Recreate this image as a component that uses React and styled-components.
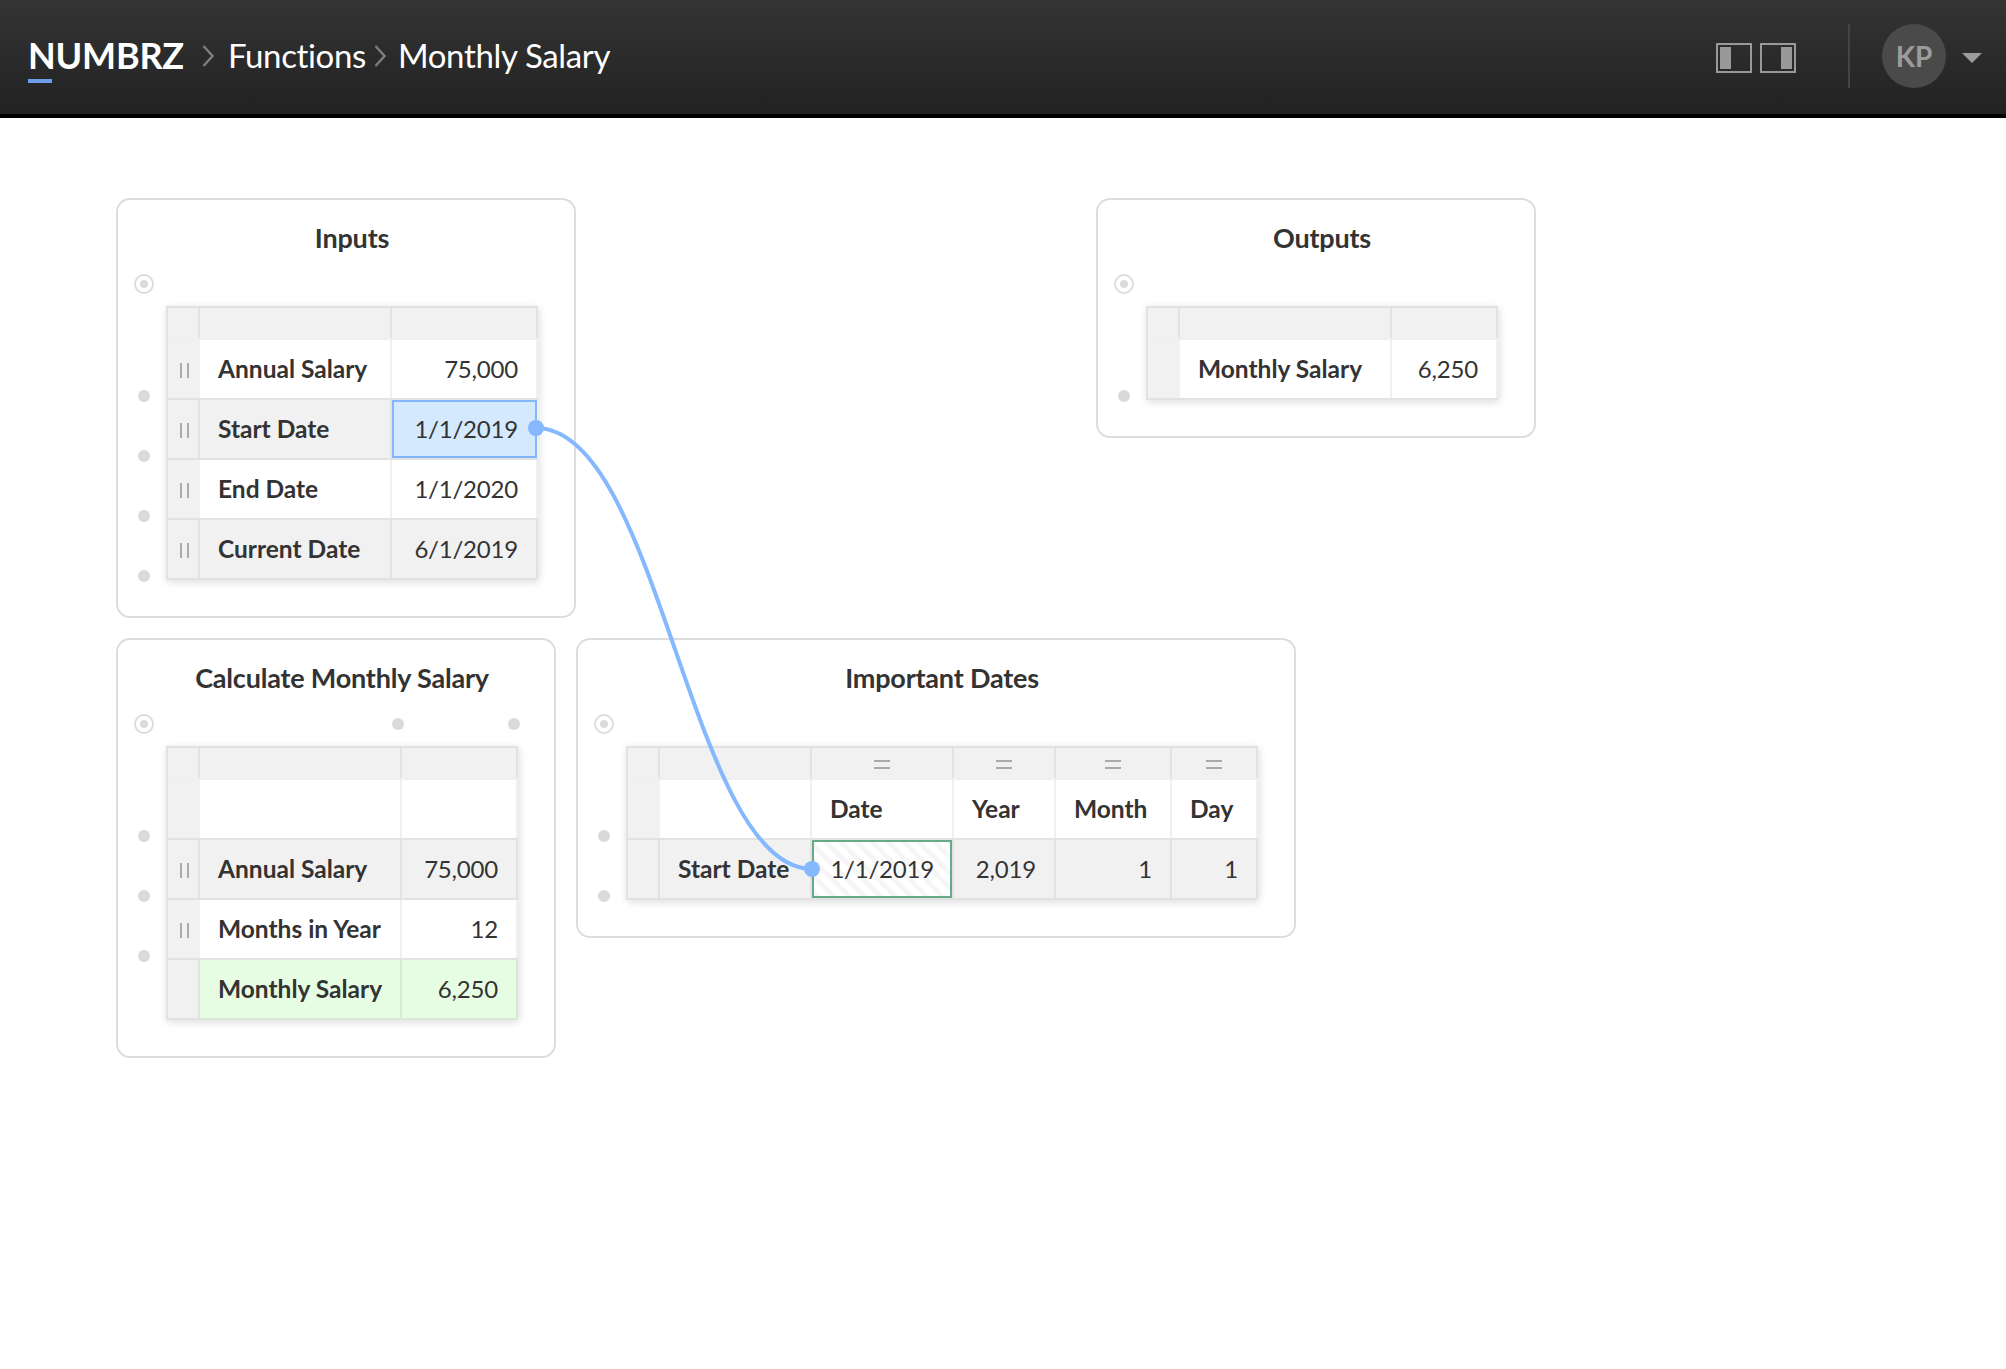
import React from "react";
import styled, { createGlobalStyle } from "styled-components";

const Global = createGlobalStyle`
  html, body { margin: 0; padding: 0; background: #fff; }
  body { font-family: Lato, "Open Sans", "Liberation Sans", sans-serif; color: #333; }
  * { box-sizing: border-box; }
`;

const Page = styled.div`
  width: 2006px;
  height: 1369px;
  overflow: hidden;
  background: #fff;
`;

const TopBar = styled.header`
  height: 118px;
  border-bottom: 4px solid #000;
  background: linear-gradient(#343434, #222222);
  display: flex;
  align-items: center;
  padding: 0 24px 2px 28px;
`;

const Crumbs = styled.nav`
  display: flex;
  align-items: center;
  flex: 1;
  margin-top: -2px;
  color: #fff;
`;

const Logo = styled.span`
  position: relative;
  font-size: 36px;
  font-weight: 700;
  line-height: 56px;
  letter-spacing: -0.2px;
  &::after {
    content: "";
    position: absolute;
    left: 0;
    top: 52px;
    width: 24px;
    height: 4px;
    background: #6f9fec;
  }
`;

const Crumb = styled.span`
  font-size: 33px;
  line-height: 56px;
  letter-spacing: -0.35px;
`;

const Chevron = styled.svg`
  width: 12px;
  height: 22px;
  margin: 2px ${(p) => p.$right}px 0 ${(p) => p.$left}px;
  fill: none;
  stroke: #7d7d7d;
  stroke-width: 2.4;
`;

const LayoutIcon = styled.svg`
  width: 36px;
  height: 30px;
  margin: 4px 0 0 8px;
  display: block;
`;

const Divider = styled.div`
  width: 2px;
  height: 64px;
  background: #444;
  margin: 0 32px 0 52px;
`;

const Avatar = styled.div`
  width: 64px;
  height: 64px;
  border-radius: 50%;
  background: #4a4a4a;
  color: #9c9c9c;
  font-size: 28px;
  font-weight: 700;
  display: flex;
  align-items: center;
  justify-content: center;
`;

const Caret = styled.div`
  width: 0;
  height: 0;
  margin: 4px 0 0 16px;
  border-left: 10px solid transparent;
  border-right: 10px solid transparent;
  border-top: 10px solid #9c9c9c;
`;

const Canvas = styled.main`
  position: relative;
  height: 1251px;
  padding: 80px 0 0 116px;
  display: flex;
  flex-direction: column;
  gap: 20px;
`;

const PanelRow = styled.div`
  display: flex;
  align-items: flex-start;
  gap: ${(p) => p.$gap}px;
`;

const Panel = styled.section`
  border: 2px solid #ddd;
  border-radius: 14px;
  padding: 0 36px 36px 48px;
  background: #fff;
`;

const Title = styled.h2`
  margin: 0;
  height: 106px;
  padding-top: 19px;
  font-size: 27px;
  line-height: 38px;
  font-weight: 700;
  letter-spacing: -0.2px;
  text-align: center;
  color: #333;
`;

const Table = styled.div`
  position: relative;
  border-top: 2px solid #e2e2e2;
  box-shadow: 1px 2px 8px rgba(0, 0, 0, 0.14);
`;

const Radio = styled.span`
  position: absolute;
  left: -32px;
  top: -34px;
  width: 20px;
  height: 20px;
  border: 2px solid #ddd;
  border-radius: 50%;
  &::after {
    content: "";
    position: absolute;
    left: 4px;
    top: 4px;
    width: 8px;
    height: 8px;
    border-radius: 50%;
    background: #dadada;
  }
`;

const Row = styled.div`
  position: relative;
  display: grid;
  grid-template-columns: ${(p) => p.$cols};
  height: ${(p) => (p.$header ? 32 : 60)}px;
  border-left: 2px solid #e2e2e2;
  border-bottom: 2px solid ${(p) => (p.$header ? "#f0f0f0" : "#e2e2e2")};
  background: ${(p) => (p.$grey ? "#f1f1f1" : "#fff")};
`;

const RowPort = styled.span`
  position: absolute;
  left: -30px;
  bottom: -4px;
  width: 12px;
  height: 12px;
  border-radius: 50%;
  background: #dadada;
`;

const HandleCell = styled.div`
  position: relative;
  background: #f1f1f1;
  border-right: 2px solid ${(p) => (p.$line ? "#e2e2e2" : "#f1f1f1")};
  display: flex;
  align-items: center;
  justify-content: center;
  padding-left: 2px;
`;

const RowHandle = styled.span`
  width: 9px;
  height: 15px;
  margin-top: 2px;
  border-left: 2px solid #aaa;
  border-right: 2px solid #aaa;
`;

const ColHandle = styled.span`
  width: 16px;
  height: 9px;
  margin-top: 2px;
  border-top: 2px solid #aaa;
  border-bottom: 2px solid #aaa;
`;

const HeadCell = styled.div`
  position: relative;
  background: #f1f1f1;
  border-right: 2px solid #e2e2e2;
  display: flex;
  align-items: center;
  justify-content: center;
`;

const ColPort = styled.span`
  position: absolute;
  right: -4px;
  top: -30px;
  width: 12px;
  height: 12px;
  border-radius: 50%;
  background: #dadada;
`;

const variants = {
  plain: "border-right: 2px solid #f0f0f0;",
  grey: "border-right: 2px solid #e2e2e2;",
  green: "background: #e6fde3; border-right: 2px solid #d9e9d6; box-shadow: 0 2px 0 #d9e9d6;",
  selected: "margin-right: 1px; padding-right: 17px; background: #d4e9fd; border: 2px solid #82b8fb;",
  target:
    "margin-right: 2px; padding-right: 16px; border: 2px solid #66ab88; box-shadow: 2px 0 0 #e2e2e2; background: repeating-linear-gradient(45deg, #f6f6f6 0 5px, #fff 5px 11px);",
};

const Cell = styled.div`
  display: flex;
  align-items: center;
  justify-content: ${(p) => (p.$label ? "flex-start" : "flex-end")};
  padding: 0 18px 2px ${(p) => (p.$label ? 18 : 0)}px;
  font-size: ${(p) => (p.$label ? 24.5 : 24)}px;
  letter-spacing: ${(p) => (p.$label ? 0 : -0.2)}px;
  font-weight: ${(p) => (p.$label ? 700 : 400)};
  color: #333;
  white-space: nowrap;
  ${(p) => variants[p.$kind || "plain"]}
`;

const ConnectorLayer = styled.svg`
  position: absolute;
  left: 0;
  top: 0;
  width: 2006px;
  height: 1251px;
  pointer-events: none;
`;

const Header = ({ cols, colPorts, colHandles }) => (
  <Row $header $cols={cols}>
    <HandleCell $line />
    {Array.from({ length: cols.split(" ").length - 1 }, (_, i) => (
      <HeadCell key={i}>
        {colHandles && i > 0 && <ColHandle />}
        {colPorts && <ColPort />}
      </HeadCell>
    ))}
  </Row>
);

const ChevronIcon = ({ left, right }) => (
  <Chevron $left={left} $right={right} viewBox="0 0 12 22">
    <polyline points="1.5,1 10.5,11 1.5,21" />
  </Chevron>
);

const Grid = ({ cols, colPorts, colHandles, children }) => (
  <Table>
    <Radio />
    <Header cols={cols} colPorts={colPorts} colHandles={colHandles} />
    {children}
  </Table>
);

const DataRow = ({ cols, grey, port = true, handle = true, line, label, value, kind }) => (
  <Row $cols={cols} $grey={grey}>
    {port && <RowPort />}
    <HandleCell $line={line ?? grey}>{handle && <RowHandle />}</HandleCell>
    <Cell $label $kind={kind === "green" ? "green" : grey ? "grey" : "plain"}>{label}</Cell>
    <Cell $kind={kind || (grey ? "grey" : "plain")}>{value}</Cell>
  </Row>
);

const INPUT_COLS = "32px 192px 146px";
const CALC_COLS = "32px 202px 116px";
const OUT_COLS = "32px 212px 106px";
const DATE_COLS = "32px 152px 142px 102px 116px 86px";

export default function App() {
  return (
    <Page>
      <Global />
      <TopBar>
        <Crumbs>
          <Logo>NUMBRZ</Logo>
          <ChevronIcon left={18} right={14} />
          <Crumb>Functions</Crumb>
          <ChevronIcon left={8} right={12} />
          <Crumb>Monthly Salary</Crumb>
        </Crumbs>
        <LayoutIcon viewBox="0 0 36 30">
          <rect x="1" y="1" width="34" height="28" fill="none" stroke="#999" strokeWidth="2" />
          <rect x="4" y="4" width="11" height="22" fill="#999" />
        </LayoutIcon>
        <LayoutIcon viewBox="0 0 36 30">
          <rect x="1" y="1" width="34" height="28" fill="none" stroke="#999" strokeWidth="2" />
          <rect x="21" y="4" width="11" height="22" fill="#999" />
        </LayoutIcon>
        <Divider />
        <Avatar>KP</Avatar>
        <Caret />
      </TopBar>
      <Canvas>
        <PanelRow $gap={520}>
          <Panel>
            <Title>Inputs</Title>
            <Grid cols={INPUT_COLS}>
              <DataRow cols={INPUT_COLS} label="Annual Salary" value="75,000" />
              <DataRow cols={INPUT_COLS} grey label="Start Date" value="1/1/2019" kind="selected" />
              <DataRow cols={INPUT_COLS} label="End Date" value="1/1/2020" />
              <DataRow cols={INPUT_COLS} grey label="Current Date" value="6/1/2019" />
            </Grid>
          </Panel>
          <Panel>
            <Title>Outputs</Title>
            <Grid cols={OUT_COLS}>
              <DataRow cols={OUT_COLS} handle={false} label="Monthly Salary" value="6,250" />
            </Grid>
          </Panel>
        </PanelRow>
        <PanelRow $gap={20}>
          <Panel>
            <Title>Calculate Monthly Salary</Title>
            <Grid cols={CALC_COLS} colPorts>
              <DataRow cols={CALC_COLS} handle={false} label="" value="" />
              <DataRow cols={CALC_COLS} grey label="Annual Salary" value="75,000" />
              <DataRow cols={CALC_COLS} label="Months in Year" value="12" />
              <DataRow cols={CALC_COLS} port={false} handle={false} line label="Monthly Salary" value="6,250" kind="green" />
            </Grid>
          </Panel>
          <Panel>
            <Title>Important Dates</Title>
            <Grid cols={DATE_COLS} colHandles>
              <Row $cols={DATE_COLS}>
                <RowPort />
                <HandleCell />
                <Cell $label />
                <Cell $label>Date</Cell>
                <Cell $label>Year</Cell>
                <Cell $label>Month</Cell>
                <Cell $label>Day</Cell>
              </Row>
              <Row $cols={DATE_COLS} $grey>
                <RowPort />
                <HandleCell $line />
                <Cell $label $kind="grey">Start Date</Cell>
                <Cell $kind="target">1/1/2019</Cell>
                <Cell $kind="grey">2,019</Cell>
                <Cell $kind="grey">1</Cell>
                <Cell $kind="grey">1</Cell>
              </Row>
            </Grid>
          </Panel>
        </PanelRow>
        <ConnectorLayer viewBox="0 0 2006 1251">
          <path d="M536 310 C660 310 690 751 812 751" fill="none" stroke="#85b8ff" strokeWidth="4" />
          <circle cx="536" cy="310" r="8" fill="#85b8ff" />
          <circle cx="812" cy="751" r="8" fill="#85b8ff" />
        </ConnectorLayer>
      </Canvas>
    </Page>
  );
}
